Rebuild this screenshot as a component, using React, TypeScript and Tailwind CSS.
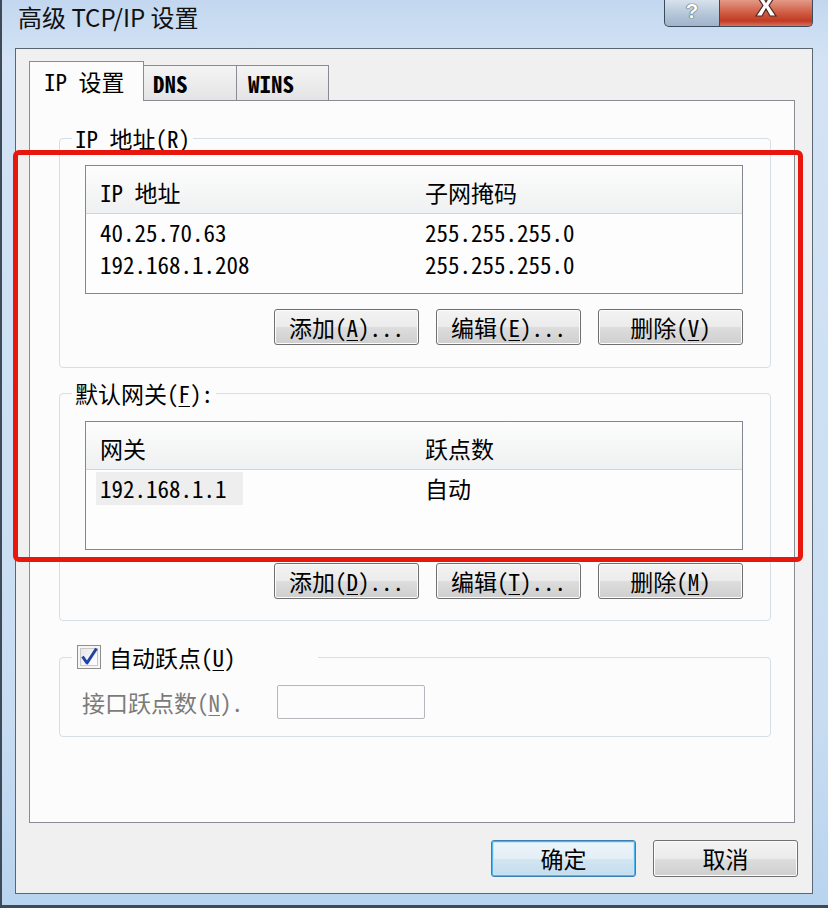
import React from "react";

const ui = "font-['Noto_Sans_Mono_CJK_SC','Noto_Sans_CJK_SC',sans-serif] text-[23px] text-black";

const btn =
  "flex h-[36px] w-[145px] items-center justify-center rounded-[3px] border border-[#707070] bg-[linear-gradient(to_bottom,#f3f3f3_0%,#ebebeb_50%,#dddddd_51%,#cfcfcf_100%)] shadow-[inset_0_0_0_1px_#fcfcfc] leading-none";

const Key = ({ k }: { k: string }) => (
  <span className="underline decoration-1 underline-offset-[3px]">{k}</span>
);

type Row = { a: string; b: string };

const ListView = ({
  head,
  rows,
  mark,
}: {
  head: [string, string];
  rows: Row[];
  mark?: boolean;
}) => (
  <div className="h-[129px] border border-[#828790] bg-[#fdfdfd]">
    <div className="flex h-[48px] items-center border-b border-[#d5d5d5] bg-[linear-gradient(to_bottom,#fdfdfd,#eff0f1)] pt-[5px]">
      <div className="w-[325px] pl-[14px]">{head[0]}</div>
      <div className="pl-[14px]">{head[1]}</div>
    </div>
    <div className="pt-[2px]">
      {rows.map((r) => (
        <div key={r.a} className="flex h-[32px] items-center">
          <div className="w-[325px]">
            {mark ? (
              <span className="ml-[10px] inline-flex h-[33px] w-[147px] items-center bg-[#eeeeee] pl-[4px]">
                {r.a}
              </span>
            ) : (
              <span className="pl-[14px]">{r.a}</span>
            )}
          </div>
          <div className="pl-[14px]">{r.b}</div>
        </div>
      ))}
    </div>
  </div>
);

const Buttons = ({ keys }: { keys: [string, string, string] }) => (
  <div className="flex justify-end gap-[17px]">
    <button className={btn}>
      添加(<Key k={keys[0]} />)...
    </button>
    <button className={btn}>
      编辑(<Key k={keys[1]} />)...
    </button>
    <button className={btn}>
      删除(<Key k={keys[2]} />)
    </button>
  </div>
);

const CheckBox = () => (
  <svg width="24" height="24" viewBox="0 0 24 24">
    <defs>
      <linearGradient id="cb" x1="0" y1="0" x2="1" y2="1">
        <stop offset="0" stopColor="#e6e6e6" />
        <stop offset="1" stopColor="#ffffff" />
      </linearGradient>
    </defs>
    <rect x="0.5" y="0.5" width="23" height="23" fill="#f6f6f6" stroke="#8e8f8f" />
    <rect x="3.5" y="3.5" width="17" height="17" fill="url(#cb)" stroke="#c8c8c8" />
    <path d="M5.5 11.5 L10 18 L19.5 3.5" fill="none" stroke="#2243a6" strokeWidth="3" strokeLinejoin="round" />
  </svg>
);

export default function App() {
  return (
    <div
      className={`relative flex h-[908px] w-[828px] flex-col overflow-hidden border-b-[3px] border-l-[2px] border-[#3e4a58] bg-[linear-gradient(to_bottom,#c2d7ef,#d3e3f5_60px,#c9ddf2_700px,#b9d4ef)] pl-[13px] pr-[15px] ${ui}`}
    >
      {/* title bar */}
      <div className="flex h-[48px] items-start justify-between">
        <div className="ml-[3px] pt-[3px] font-['Noto_Sans_CJK_SC',sans-serif] text-[24px] leading-[28px] text-[#111]">
          高级 TCP/IP 设置
        </div>
        <div className="flex h-[27px]">
          <div className="flex h-full w-[56px] items-start justify-center overflow-hidden rounded-bl-[5px] border border-t-0 border-[#3d4a5b] bg-[linear-gradient(to_bottom,#d6e1ec,#b4c6d8_55%,#9fb4c9)]">
            <span className="font-['Liberation_Sans',sans-serif] text-[21px] font-bold leading-[22px] text-white [text-shadow:0_0_1px_#333,0_0_1px_#333]">
              ?
            </span>
          </div>
          <div className="flex h-full w-[93px] justify-center overflow-hidden rounded-br-[5px] border border-l-0 border-t-0 border-[#3d4a5b] bg-[linear-gradient(to_bottom,#e39a87,#d05a42_50%,#c03b24_80%,#d9715a)]">
            <svg width="24" height="24" viewBox="0 0 24 24" className="-mt-[6px]">
              <polygon
                points="2,1 8,1 12,8 16,1 22,1 15,11.5 22,22 16,22 12,15 8,22 2,22 9,11.5"
                fill="#ffffff"
                stroke="#4a2a24"
                strokeWidth="1.2"
              />
            </svg>
          </div>
        </div>
      </div>

      {/* client area */}
      <div className="flex h-[846px] flex-col border border-[#5b6673] bg-[#f0f0f0]">
        {/* tabs */}
        <div className="ml-[13px] mt-[12px] flex h-[39px] items-end">
          <div className="relative z-10 -mb-px flex h-[40px] w-[115px] items-center border-x border-t border-[#898c95] bg-[#fcfcfc] pl-[14px]">
            IP 设置
          </div>
          <div className="flex h-[35px] w-[93px] items-center border-r border-t border-[#898c95] bg-[linear-gradient(to_bottom,#f4f4f4,#e4e4e4)] pl-[9px] font-bold">
            DNS
          </div>
          <div className="flex h-[35px] w-[92px] items-center border-r border-t border-[#898c95] bg-[linear-gradient(to_bottom,#f4f4f4,#e4e4e4)] pl-[11px] font-bold">
            WINS
          </div>
        </div>

        {/* tab panel */}
        <div className="ml-[13px] mr-[17px] h-[723px] border border-[#898c95] bg-[#fcfcfc] pl-[29px] pr-[23px]">
          <fieldset className="mt-[24px] rounded-[4px] border border-[#d5dfe5] px-[12px] pb-[22px]">
            <legend className="px-[3px] leading-[26px]">
              IP 地址(<Key k="R" />)
            </legend>
            <div className="pl-[13px] pr-[15px]">
              <div className="mt-[14px]">
                <ListView
                  head={["IP 地址", "子网掩码"]}
                  rows={[
                    { a: "40.25.70.63", b: "255.255.255.0" },
                    { a: "192.168.1.208", b: "255.255.255.0" },
                  ]}
                />
              </div>
              <div className="mt-[15px]">
                <Buttons keys={["A", "E", "V"]} />
              </div>
            </div>
          </fieldset>

          <fieldset className="mt-[12px] rounded-[4px] border border-[#d5dfe5] px-[12px] pb-[21px]">
            <legend className="px-[3px] leading-[26px]">
              默认网关(<Key k="F" />):
            </legend>
            <div className="pl-[13px] pr-[15px]">
              <div className="mt-[15px]">
                <ListView head={["网关", "跃点数"]} rows={[{ a: "192.168.1.1", b: "自动" }]} mark />
              </div>
              <div className="mt-[13px]">
                <Buttons keys={["D", "T", "M"]} />
              </div>
            </div>
          </fieldset>

          <fieldset className="mt-[23px] rounded-[4px] border border-[#d5dfe5] px-[12px] pb-[16px]">
            <legend className="flex h-[26px] w-[246px] items-center gap-[8px] pl-[5px]">
              <CheckBox />
              <span>
                自动跃点(<Key k="U" />)
              </span>
            </legend>
            <div className="mt-[15px] flex items-center">
              <span className="w-[205px] pl-[10px] text-[#7b7b7b]">
                接口跃点数(<Key k="N" />).
              </span>
              <div className="h-[34px] w-[148px] rounded-[2px] border border-[#b4b8bc] bg-[#fcfcfc]" />
            </div>
          </fieldset>
        </div>

        {/* dialog buttons */}
        <div className="mt-[17px] flex justify-end gap-[17px] pr-[14px]">
          <button className="flex h-[37px] w-[145px] items-center justify-center rounded-[3px] border border-[#3c7fb1] bg-[linear-gradient(to_bottom,#f0f6fa_0%,#e3eef6_50%,#d3e6f2_51%,#c3dcee_100%)] shadow-[inset_0_0_0_1px_#4fb3ec,inset_0_0_0_2px_#c6e6f8] leading-none">
            确定
          </button>
          <button className="flex h-[37px] w-[145px] items-center justify-center rounded-[3px] border border-[#707070] bg-[linear-gradient(to_bottom,#f3f3f3_0%,#ebebeb_50%,#dddddd_51%,#cfcfcf_100%)] shadow-[inset_0_0_0_1px_#fcfcfc] leading-none">
            取消
          </button>
        </div>
      </div>

      {/* red annotation */}
      <div className="pointer-events-none absolute left-[11px] top-[150px] h-[412px] w-[790px] rounded-[6px] border-[5px] border-[#e8170e]" />
    </div>
  );
}
